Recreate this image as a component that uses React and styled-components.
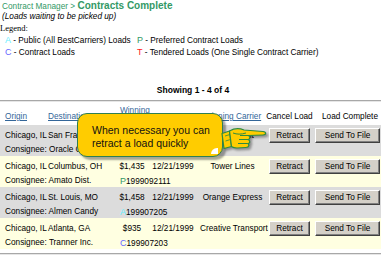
import React from 'react';
import styled, { createGlobalStyle } from 'styled-components';

const COLUMNS = '48px 70px 28px 54px 65px 49px 67px';

const GlobalStyle = createGlobalStyle`
  html, body {
    margin: 0;
    padding: 0;
    background: #fff;
  }
  body {
    font-family: 'Liberation Sans', Arial, sans-serif;
    font-size: 8.25px;
    color: #000;
    overflow: hidden;
  }
`;

const Page = styled.div`
  position: relative;
  width: 381px;
  height: 259px;
  overflow: hidden;
`;

const TitleLine = styled.div`
  padding-left: 2px;
  height: 11px;
  line-height: 11px;
  color: #339966;
  white-space: nowrap;
`;

const Crumb = styled.span`
  font-size: 8.25px;
`;

const Heading = styled.span`
  font-size: 10px;
  font-weight: bold;
`;

const Note = styled.div`
  padding-left: 2px;
  height: 12px;
  line-height: 12px;
  font-style: italic;
`;

const LegendLabel = styled.div`
  font-family: 'Liberation Serif', 'Times New Roman', serif;
  font-size: 8.5px;
  height: 11px;
  line-height: 11px;
`;

const LegendGrid = styled.div`
  display: grid;
  grid-template-columns: 132px auto;
  grid-auto-rows: 12px;
  align-items: center;
  padding-left: 5px;
`;

const LegendItem = styled.div`
  white-space: nowrap;
  line-height: 12px;
`;

const Key = styled.span`
  color: ${p => p.$color};
  font-size: 9px;
`;

const Showing = styled.div`
  margin-top: 26px;
  padding-left: 5px;
  height: 12px;
  line-height: 12px;
  text-align: center;
  font-weight: bold;
  font-size: 8.5px;
`;

const Rule = styled.div`
  margin-top: ${p => p.$gap}px;
  border-top: 1px solid #a8a8a8;
  border-bottom: 1px solid #e6e6e6;
`;

const HeaderRow = styled.div`
  display: grid;
  grid-template-columns: ${COLUMNS};
  height: 23px;
  align-items: end;
  padding-bottom: 3px;
  box-sizing: border-box;
  line-height: 10px;
`;

const HeaderCell = styled.div`
  white-space: nowrap;
  text-align: ${p => p.$align || 'left'};
  padding-left: ${p => p.$pad || 0}px;
  margin-bottom: ${p => p.$lift || 0}px;
`;

const HeadLink = styled.a`
  color: #336699;
  text-decoration: underline;
`;

const LoadRow = styled.div`
  display: grid;
  grid-template-columns: ${COLUMNS};
  grid-template-rows: 16px 13px;
  padding-top: 2px;
  background: ${p => (p.$shade ? '#dcdcdc' : '#ffffe1')};
  align-items: center;
`;

const Cell = styled.div`
  white-space: nowrap;
  text-align: ${p => p.$align || 'left'};
  padding-left: ${p => p.$pad || 0}px;
  grid-column: ${p => p.$span || 'auto'};
`;

const ButtonCell = styled.div`
  display: flex;
  justify-content: center;
  align-items: flex-start;
  padding-top: 1px;
  align-self: start;
`;

const Button = styled.button`
  width: ${p => p.$w}px;
  height: 15px;
  padding: 0;
  box-sizing: border-box;
  background: #d4d0c8;
  border: 1px solid;
  border-color: #ffffff #404040 #404040 #ffffff;
  box-shadow: inset -1px -1px 0 #808080;
  font-family: 'Liberation Sans', Arial, sans-serif;
  font-size: 8.25px;
  color: #000;
  line-height: 12px;
`;

const Callout = styled.div`
  position: absolute;
  left: 77px;
  top: 113px;
  width: 146px;
  height: 44px;
  box-sizing: border-box;
  padding: 10px 0 0 14px;
  background: #ffcc00;
  border: 1.5px solid #2f7f52;
  border-radius: 10px;
  box-shadow: 3px 3px 2px rgba(0, 0, 0, 0.35);
  font-size: 10.5px;
  line-height: 12.5px;
  color: #111;
  white-space: nowrap;

  &::after {
    content: '';
    position: absolute;
    right: 4px;
    bottom: 2px;
    width: 7px;
    height: 6px;
    background: #fff;
    border-top-left-radius: 7px;
  }
`;

const Hand = styled.svg`
  position: absolute;
  left: 219px;
  top: 122px;
  width: 50px;
  height: 30px;
  filter: drop-shadow(2px 2px 1px rgba(0, 0, 0, 0.35));
`;

const legend = [
  { key: 'A', color: '#66eeff', text: 'Public (All BestCarriers) Loads' },
  { key: 'P', color: '#339966', text: 'Preferred Contract Loads' },
  { key: 'C', color: '#6666ff', text: 'Contract Loads' },
  { key: 'T', color: '#ff2222', text: 'Tendered Loads (One Single Contract Carrier)' },
];

const keyColor = { A: '#66eeff', P: '#339966', C: '#6666ff', T: '#ff2222' };

const loads = [
  { origin: 'Chicago, IL', dest: 'San Francisco, CA', bid: '$1,250', date: '12/21/1999', carrier: 'Sun Freight', consignee: 'Oracle Corp.', key: 'T', code: '1999072214' },
  { origin: 'Chicago, IL', dest: 'Columbus, OH', bid: '$1,435', date: '12/21/1999', carrier: 'Tower Lines', consignee: 'Amato Dist.', key: 'P', code: '1999092111' },
  { origin: 'Chicago, IL', dest: 'St. Louis, MO', bid: '$1,458', date: '12/21/1999', carrier: 'Orange Express', consignee: 'Almen Candy', key: 'A', code: '199907205' },
  { origin: 'Chicago, IL', dest: 'Atlanta, GA', bid: '$935', date: '12/21/1999', carrier: 'Creative Transport', consignee: 'Tranner Inc.', key: 'C', code: '199907203' },
];

function PointingHand() {
  return (
    <Hand viewBox="0 0 50 30">
      <path d="M3,11.5 L10.5,9 L12.5,24.5 L5,26.5 Z" fill="#ffcc00" stroke="#2e8b3e" strokeWidth="1.2" strokeLinejoin="round" />
      <path
        d="M10.5,9 C14,7 20,6 25,8 L44,9.5 C47.5,9.8 47.5,13 44,13 L29,13.5 C31.5,14 31.5,17.5 28.5,17.5 C31.5,18 31.5,21.5 28.5,21.5 C30.5,22 30.5,25.5 27,25.5 L18,26 C15.5,26 13.5,25.3 12.5,24.5 Z"
        fill="#ffcc00"
        stroke="#2e8b3e"
        strokeWidth="1.2"
        strokeLinejoin="round"
      />
      <path d="M21,13.5 L29,13.5 M20,17.5 L28.5,17.5 M19,21.5 L28,21.5 M14,11 C18,12.5 22,12.5 27,11" fill="none" stroke="#2e8b3e" strokeWidth="1" />
      <path d="M6,14 L11,12.5 M6.5,19 L11.5,17.5" fill="none" stroke="#2e8b3e" strokeWidth="0.8" />
    </Hand>
  );
}

export default function App() {
  return (
    <Page>
      <GlobalStyle />
      <TitleLine>
        <Crumb>Contract Manager &gt; </Crumb>
        <Heading>Contracts Complete</Heading>
      </TitleLine>
      <Note>(Loads waiting to be picked up)</Note>
      <LegendLabel>Legend:</LegendLabel>
      <LegendGrid>
        {legend.map(item => (
          <LegendItem key={item.key}>
            <Key $color={item.color}>{item.key}</Key> - {item.text}
          </LegendItem>
        ))}
      </LegendGrid>
      <Showing>Showing 1 - 4 of 4</Showing>
      <Rule $gap={4} />
      <HeaderRow>
        <HeaderCell $pad={5}><HeadLink href="#">Origin</HeadLink></HeaderCell>
        <HeaderCell><HeadLink href="#">Destination</HeadLink></HeaderCell>
        <HeaderCell $pad={2} $lift={-4}><HeadLink href="#">Winning<br />Bid</HeadLink></HeaderCell>
        <HeaderCell />
        <HeaderCell $align="center"><HeadLink href="#">Winning Carrier</HeadLink></HeaderCell>
        <HeaderCell $align="center">Cancel Load</HeaderCell>
        <HeaderCell $align="center" $pad={5}>Load Complete</HeaderCell>
      </HeaderRow>
      {loads.map((load, i) => (
        <LoadRow key={load.code} $shade={i % 2 === 0}>
          <Cell $pad={5}>{load.origin}</Cell>
          <Cell>{load.dest}</Cell>
          <Cell $align="center">{load.bid}</Cell>
          <Cell $align="center">{load.date}</Cell>
          <Cell $align="center">{load.carrier}</Cell>
          <ButtonCell><Button $w={41}>Retract</Button></ButtonCell>
          <ButtonCell><Button $w={65}>Send To File</Button></ButtonCell>
          <Cell $pad={5} $span="1 / 3">Consignee: {load.consignee}</Cell>
          <Cell $pad={2} $span="3 / 6">
            <Key $color={keyColor[load.key]}>{load.key}</Key>{load.code}
          </Cell>
        </LoadRow>
      ))}
      <Rule $gap={4} />
      <Callout>
        When necessary you can
        <br />
        retract a load quickly
      </Callout>
      <PointingHand />
    </Page>
  );
}
